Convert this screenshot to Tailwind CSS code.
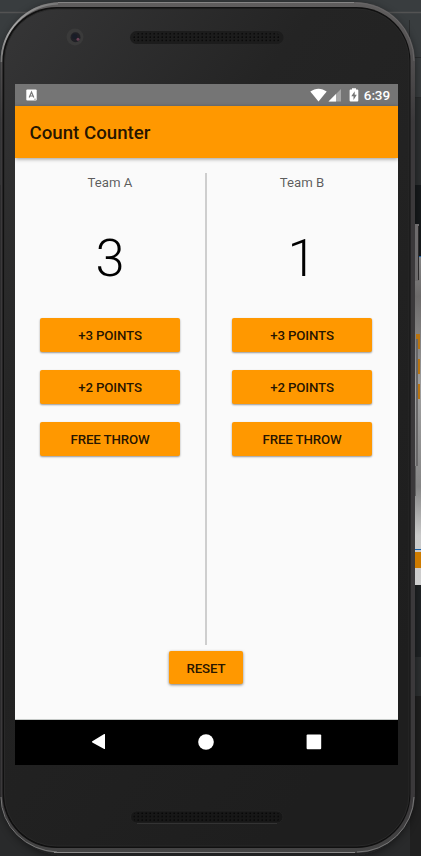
<!DOCTYPE html>
<html lang="en">
<head>
<meta charset="utf-8">
<title>Count Counter</title>
<script src="https://cdn.jsdelivr.net/npm/@tailwindcss/browser@4"></script>
</head>
<body class="relative h-[856px] w-[421px] overflow-hidden bg-[#292a2b] font-['Roboto',sans-serif]">
<!-- Desktop backdrop and handset body -->
<svg class="absolute inset-0" width="421" height="856" viewBox="0 0 421 856" aria-hidden="true">
  <defs>
    <linearGradient id="body" x1="0" y1="0" x2=".65" y2="1"><stop offset="0" stop-color="#363637"/><stop offset=".35" stop-color="#242424"/><stop offset="1" stop-color="#1e1e1e"/></linearGradient>
    <linearGradient id="rim" x1="0" y1="0" x2="0" y2="1"><stop offset="0" stop-color="#605e5e"/><stop offset=".07" stop-color="#504e4f"/><stop offset=".14" stop-color="#3b393b"/><stop offset=".94" stop-color="#3b393b"/><stop offset="1" stop-color="#444"/></linearGradient>
    <linearGradient id="side" x1="0" y1="0" x2="0" y2="1"><stop offset="0" stop-color="#858585"/><stop offset=".12" stop-color="#6c6a6a"/><stop offset=".4" stop-color="#a0a0a0"/><stop offset=".7" stop-color="#858585"/><stop offset=".85" stop-color="#c9c9c9"/><stop offset="1" stop-color="#cecece"/></linearGradient>
    <linearGradient id="glint" x1="0" y1="1" x2="1" y2="0"><stop offset="0" stop-color="#777"/><stop offset=".35" stop-color="#aaa"/><stop offset="1" stop-color="#777"/></linearGradient>
    <pattern id="mesh" x="133" y="32.7" width="4" height="3.4" patternUnits="userSpaceOnUse"><circle cx="1.2" cy="1" r=".8" fill="#050505"/></pattern>
    <filter id="soft" x="-10%" y="-10%" width="120%" height="120%"><feGaussianBlur stdDeviation="5"/></filter>
  </defs>
  <path d="M0 0H421V185H0z" fill="#393d3f"/>
  <path d="M0 12.5H421" stroke="#535353" stroke-width="1.4"/>
  <path d="M409.5 20v36M412 57.500H421M412 97.500H421M412 141.500H421" stroke="#2a2c2d"/>
  <path d="M410 98h11v87h-11z" fill="#2d3031"/>
  <path d="M410 185h11v71h-11z" fill="#171a1c"/>
  <path d="M410 696h11v160h-11z" fill="#202020"/>
  <path d="M410 585h11v72h-11z" fill="#202325"/>
  <path d="M410 657h11v39h-11z" fill="#2d3031"/>
  <rect x="2" y="4" width="412" height="852" rx="62" fill="#0b0b0b" opacity=".6" filter="url(#soft)"/>
  <path d="M410 257h11v328h-11z" fill="url(#side)"/>
  <path d="M419 256h2v1h-2z" fill="#1760aa"/>
  <path d="M416 334h4v15h-4zM417 359h3v15h-3zM417 384h3v15h-3z" fill="#b87310"/>
  <path d="M415 549h6v1h-6z" fill="#1760a8"/>
  <path d="M415 552h6v16h-6z" fill="#ce7b00"/>
  <path d="M415 224h4v57h-4z" fill="#6d6b6c"/><path d="M418.500 226v54" stroke="#2c2a2b"/>
  <path d="M416 339h2v127h-2z" fill="#686768"/><path d="M415 466h1v30h-1z" fill="#606060"/>
  <rect x=".5" y="2" width="414.500" height="851" rx="60" fill="url(#rim)"/>
  <path d="M58 2.500H354" stroke="#858484"/>
  <path d="M54 852.500H355" stroke="#8b8b8b"/>
  <path d="M1.500 62A59 58 0 0 1 58 3.500" fill="none" stroke="url(#glint)" stroke-width="1.800"/>
  <path d="M356 3A58 58 0 0 1 414 61" fill="none" stroke="#686667"/>
  <path d="M1 797A59 55 0 0 0 57 852M357 852A57 57 0 0 0 414 797" fill="none" stroke="#777"/>
  <rect x="2.500" y="7" width="408" height="841" rx="54" fill="#101010"/>
  <rect x="4.500" y="9" width="404.500" height="837" rx="52" fill="url(#body)" stroke="#292929"/>
  <circle cx="75" cy="37" r="8.500" fill="#3a3a3a"/><circle cx="75.500" cy="37.300" r="5" fill="#202026"/>
  <circle cx="74.700" cy="36.500" r="2.500" fill="#191d28"/><circle cx="78" cy="39.300" r="1.500" fill="#6b4057"/>
  <rect x="130" y="31" width="153.500" height="13" rx="6.500" fill="#1c1c1c"/><rect x="133" y="32.700" width="147" height="10" rx="5" fill="url(#mesh)"/>
  <rect x="130.500" y="811" width="152.500" height="12" rx="6" fill="#171717" stroke="#232323"/>
  <path d="M137 823.500H277" stroke="#333"/>
  <g transform="translate(0 779.500)"><rect x="133" y="32.700" width="147" height="9.500" rx="4.700" fill="url(#mesh)"/></g>
</svg>

<div class="relative flex h-full w-[413px] flex-col pt-[84px] pl-[15px]">
<main class="flex h-[681px] w-[383px] shrink-0 flex-col overflow-hidden bg-[#fafafa] text-black">
  <header class="flex h-[22px] shrink-0 items-center bg-[#757575] pr-2 pl-[11px] text-white">
    <svg width="11" height="12" viewBox="0 0 11 12"><rect x=".3" y=".5" width="10.400" height="11" rx="1" fill="#fff"/><path d="M3.200 8.500L5.500 3l2.300 5.500M4 7h3" fill="none" stroke="#777" stroke-width="1.200"/><path d="M8 10.200h2" stroke="#aaa"/></svg>
    <svg class="ml-auto" width="17" height="14" viewBox="0 0 17 14"><path d="M.3 3.600C5.200-.3 11.800-.3 16.700 3.600L8.500 13.500z" fill="#fff"/></svg>
    <svg class="ml-[1px]" width="14" height="14" viewBox="0 0 14 14"><path d="M.5 13.500L13 1v12.500z" fill="#a6a6a6"/><path d="M.5 13.500L8 6v7.500z" fill="#fff"/></svg>
    <svg class="ml-[7px]" width="10" height="14" viewBox="0 0 10 14"><path d="M3 .3h4v1.300h1.300q1 0 1 1v10q0 1-1 1H1.600q-1 0-1-1v-10q0-1 1-1H3z" fill="#fff"/><path d="M5.700 3.300L2.300 8.200h2.200v3.700l3.300-5.100H5.700z" fill="#757575"/></svg>
    <span class="ml-[5px] pt-px text-[13.5px] leading-[21px] font-medium tracking-[-0.1px]">6:39</span>
  </header>
  <h1 class="relative flex h-[52px] shrink-0 items-center bg-[#ff9800] pt-[2px] pl-[14.5px] text-[18.7px] font-medium text-black/87 shadow-[0_1px_4px_rgba(0,0,0,0.4)]">Count Counter</h1>
  <div class="flex h-[487px] shrink-0 pt-[15px]">
    <section class="flex w-[190px] flex-col items-center">
      <h2 class="mt-[2px] h-4 text-[13.2px] leading-4 font-normal text-black/65">Team A</h2>
      <div class="mt-[36px] h-[62px] text-[52.3px] leading-[62px] font-light">3</div>
      <div class="mt-[29px] flex w-[140px] flex-col gap-[18px] text-[13.3px] font-medium tracking-[-0.15px] text-black/87">
        <button class="h-[34px] rounded-[2px] bg-[#ff9800] pt-[2px] shadow-[0_1px_2px_rgba(0,0,0,0.4)]">+3 POINTS</button>
        <button class="h-[34px] rounded-[2px] bg-[#ff9800] pt-[2px] shadow-[0_1px_2px_rgba(0,0,0,0.4)]">+2 POINTS</button>
        <button class="h-[34px] rounded-[2px] bg-[#ff9800] pt-[2px] shadow-[0_1px_2px_rgba(0,0,0,0.4)]">FREE THROW</button>
      </div>
    </section>
    <div class="w-[2px] bg-[#cecece]"></div>
    <section class="flex w-[190px] flex-col items-center">
      <h2 class="mt-[2px] h-4 text-[13.2px] leading-4 font-normal text-black/65">Team B</h2>
      <div class="mt-[36px] h-[62px] text-[52.3px] leading-[62px] font-light">1</div>
      <div class="mt-[29px] flex w-[140px] flex-col gap-[18px] text-[13.3px] font-medium tracking-[-0.15px] text-black/87">
        <button class="h-[34px] rounded-[2px] bg-[#ff9800] pt-[2px] shadow-[0_1px_2px_rgba(0,0,0,0.4)]">+3 POINTS</button>
        <button class="h-[34px] rounded-[2px] bg-[#ff9800] pt-[2px] shadow-[0_1px_2px_rgba(0,0,0,0.4)]">+2 POINTS</button>
        <button class="h-[34px] rounded-[2px] bg-[#ff9800] pt-[2px] shadow-[0_1px_2px_rgba(0,0,0,0.4)]">FREE THROW</button>
      </div>
    </section>
  </div>
  <div class="flex h-[75px] shrink-0 justify-center border-b border-[#c5c9c7] pt-[6px] pr-px">
    <button class="h-[33px] w-[74px] rounded-[2px] bg-[#ff9800] pt-[2px] text-[13.3px] font-medium tracking-[-0.15px] text-black/87 shadow-[0_1px_3px_rgba(0,0,0,0.5)]">RESET</button>
  </div>
  <nav class="flex h-[45px] shrink-0 items-center justify-between bg-black pr-[76px] pb-px pl-[76px]">
    <svg width="15" height="18" viewBox="0 0 15 18"><path d="M1.300 8.300L13.200 1q.8-.4.800.5v14q0 .9-.8.400L1.300 9.400q-.8-.5 0-1.100z" fill="#fff"/></svg>
    <svg width="16" height="16" viewBox="0 0 16 16"><circle cx="8" cy="8" r="7.800" fill="#fff"/></svg>
    <svg width="16" height="16" viewBox="0 0 16 16"><rect x=".6" y=".6" width="14.600" height="14.600" rx="1" fill="#fff"/></svg>
  </nav>
</main>
</div>
</body>
</html>
